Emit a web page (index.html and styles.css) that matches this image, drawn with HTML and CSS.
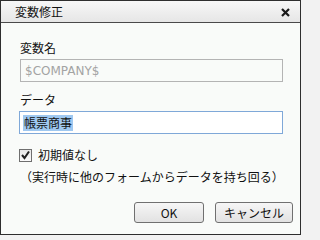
FILE: index.html
```html
<!DOCTYPE html>
<html lang="ja">
<head>
<meta charset="utf-8">
<link rel="stylesheet" href="styles.css">
</head>
<body>
<div class="dialog">
  <div class="titlebar">
    <span class="title">変数修正</span>
    <svg class="close" width="9" height="9" viewBox="0 0 9 9"><path d="M1 1 L8 8 M8 1 L1 8" stroke="#1a1a1a" stroke-width="2.2" fill="none"/></svg>
  </div>
  <div class="content">
    <div class="label">変数名</div>
    <div class="input disabled">$COMPANY$</div>
    <div class="label second">データ</div>
    <div class="input focus"><span class="sel">帳票商事</span></div>
    <div class="check-row">
      <span class="checkbox"><svg width="11" height="11" viewBox="0 0 11 11"><path d="M2 5 L4.5 8 L9 1.5" stroke="#222" stroke-width="2" fill="none"/></svg></span>
      <span class="check-label">初期値なし</span>
    </div>
    <div class="note">（実行時に他のフォームからデータを持ち回る）</div>
    <div class="buttons">
      <button class="btn ok">OK</button>
      <button class="btn cancel">キャンセル</button>
    </div>
  </div>
</div>
</body>
</html>
```
FILE: styles.css
```css
html, body {
  margin: 0;
  padding: 0;
}
body {
  background: #f2f2f2;
  font-family: "Noto Sans CJK JP", "Noto Sans", sans-serif;
  font-size: 12px;
  color: #111;
  width: 302px;
  height: 236px;
  overflow: hidden;
}
.dialog {
  width: 299px;
  height: 233px;
  border: 1px solid #2e2e2e;
  background: #f9fbf9;
  display: flex;
  flex-direction: column;
}
.titlebar {
  height: 21px;
  border-bottom: 1px solid #4a4a4a;
  background: linear-gradient(#f7f7f7, #e6e6e6);
  display: flex;
  align-items: center;
  justify-content: space-between;
  padding: 0 10px 0 14px;
}
.title {
  font-size: 12px;
  line-height: 14px;
  color: #111;
}
.close {
  display: block;
  margin-top: 2px;
}
.content {
  display: flex;
  flex-direction: column;
  padding: 18px 17px 0 18px;
}
.label {
  line-height: 14px;
  padding-left: 1px;
}
.label.second {
  margin-top: 11px;
}
.input {
  margin-top: 4px;
  height: 21px;
  border: 1px solid #b4b4b4;
  display: flex;
  align-items: center;
  padding-left: 4px;
  font-family: "DejaVu Sans", "Noto Sans CJK JP", sans-serif;
  font-size: 12px;
}
.input.disabled {
  margin-left: 1px;
  color: #a3a3a3;
  background: #f9fbf9;
}
.input.focus {
  border-color: #7fa8d8;
  background: #fff;
  padding-left: 3px;
}
.sel {
  background: #9fc8f0;
  color: #111;
  font-family: "Noto Sans CJK JP", sans-serif;
  line-height: 16px;
  padding: 0 1px;
}
.check-row {
  margin-top: 14px;
  display: flex;
  align-items: center;
  line-height: 14px;
}
.checkbox {
  width: 11px;
  height: 11px;
  border: 1px solid #6f6f6f;
  background: linear-gradient(#e8e8e8, #fbfbfb);
  display: flex;
  align-items: center;
  justify-content: center;
}
.check-label {
  margin-left: 6px;
}
.note {
  margin-top: 8px;
  line-height: 14px;
  padding-left: 1px;
}
.buttons {
  margin-top: 18px;
  display: flex;
  justify-content: flex-end;
  gap: 11px;
  margin-right: -10px;
}
.btn {
  height: 21px;
  border: 1px solid #707070;
  border-radius: 3px;
  background: linear-gradient(#f6f6f6, #e2e2e2);
  font-family: "Noto Sans CJK JP", sans-serif;
  font-size: 12px;
  color: #111;
  padding: 0;
  line-height: 18px;
}
.btn.ok {
  width: 70px;
}
.btn.cancel {
  width: 78px;
}
```
